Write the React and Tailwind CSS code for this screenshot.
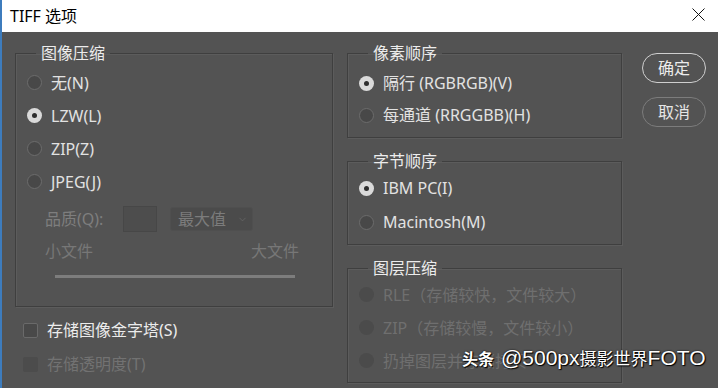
// TIFF options dialog (Photoshop dark UI)
import { ChevronDown } from 'lucide-react';

const FONT = { fontFamily: '"Noto Sans", "Noto Sans CJK SC", sans-serif' };

const Radio = ({ checked, disabled }) =>
  checked ? (
    <span className="w-[15px] h-[15px] shrink-0 rounded-full bg-[#dadada] flex items-center justify-center">
      <span className="w-[5px] h-[5px] rounded-full bg-[#2e2e2e]" />
    </span>
  ) : disabled ? (
    <span className="w-[15px] h-[15px] shrink-0 rounded-full bg-[#4b4b4b]" />
  ) : (
    <span className="w-[15px] h-[15px] shrink-0 rounded-full border border-[#6c6c6c] bg-[#484848]" />
  );

const Option = ({ label, checked, disabled, h = 'h-[33px]' }) => (
  <div className={`${h} flex items-center gap-[9px]`}>
    <Radio checked={checked} disabled={disabled} />
    <span className={disabled ? 'text-[#6f6f6f]' : 'text-[#e2e2e2]'}>{label}</span>
  </div>
);

const Group = ({ title, className, children }) => (
  <fieldset className={`border border-[#3f3f3f] shadow-[inset_1px_1px_0_#5c5c5c,1px_1px_0_#5c5c5c] pl-[11px] ${className}`}>
    <legend className="ml-[9px] px-[5px] h-[20px] leading-[20px] text-[#ececec]">{title}</legend>
    {children}
  </fieldset>
);

export default function App() {
  return (
    <div
      className="relative w-[718px] h-[388px] flex flex-col border-l-2 border-[#3d7cbd] text-[16px] leading-[20px] overflow-hidden"
      style={FONT}
    >
      <div className="h-[32px] shrink-0 bg-white flex items-center justify-between pl-[8px] pr-[13px]">
        <span className="text-[16px] text-black">TIFF 选项</span>
        <svg width="13" height="13" viewBox="0 0 13 13" className="mt-[-4px]">
          <path d="M0.5 0.5 L12.5 12.5 M12.5 0.5 L0.5 12.5" stroke="#111" strokeWidth="1" />
        </svg>
      </div>

      <div className="flex-1 bg-[#535353] flex pl-[13px] pt-[11px]">
        {/* left column */}
        <div className="w-[318px] flex flex-col">
          <Group title="图像压缩" className="h-[264px]">
            <div className="pt-[3px]">
              <Option label="无(N)" />
              <Option label="LZW(L)" checked />
              <Option label="ZIP(Z)" />
              <Option label="JPEG(J)" />
            </div>
            <div className="mt-[8px] h-[26px] flex items-center pl-[18px]">
              <span className="w-[78px] text-[#7e7e7e]">品质(Q):</span>
              <span className="w-[34px] h-[26px] border border-[#474747] bg-[#4d4d4d]" />
              <span className="ml-[13px] w-[83px] h-[24px] rounded-[3px] bg-[#4b4b4b] border border-[#4f4f4f] flex items-center justify-between pl-[7px] pr-[4px] text-[#7c7c7c]">
                最大值
                <ChevronDown size={11} strokeWidth={1.5} className="text-[#6a6a6a]" />
              </span>
            </div>
            <div className="mt-[9px] h-[20px] flex justify-between pl-[18px] pr-[33px] text-[#777777]">
              <span>小文件</span>
              <span>大文件</span>
            </div>
            <div className="mt-[14px] ml-[28px] w-[240px] h-[3px] bg-[#7d7d7d]" />
          </Group>

          <div className="mt-[13px] h-[20px] flex items-center gap-[9px] pl-[8px]">
            <span className="w-[15px] h-[15px] rounded-[2px] border border-[#6a6a6a] bg-[#494949]" />
            <span className="text-[#ececec]">存储图像金字塔(S)</span>
          </div>
          <div className="mt-[14px] h-[20px] flex items-center gap-[9px] pl-[8px]">
            <span className="w-[15px] h-[15px] rounded-[2px] bg-[#4c4c4c]" />
            <span className="text-[#727272]">存储透明度(T)</span>
          </div>
        </div>

        {/* right column */}
        <div className="ml-[14px] w-[275px] flex flex-col">
          <Group title="像素顺序" className="h-[95px]">
            <div className="pt-[4px]">
              <Option label="隔行 (RGBRGB)(V)" checked h="h-[32px]" />
              <Option label="每通道 (RRGGBB)(H)" h="h-[32px]" />
            </div>
          </Group>
          <Group title="字节顺序" className="mt-[13px] h-[94px]">
            <Option label="IBM PC(I)" checked h="h-[34px]" />
            <Option label="Macintosh(M)" h="h-[34px]" />
          </Group>
          <Group title="图层压缩" className="mt-[13px] h-[125px]">
            <Option label="RLE（存储较快，文件较大）" disabled />
            <Option label="ZIP（存储较慢，文件较小）" disabled />
            <Option label="扔掉图层并存储拷贝" disabled />
          </Group>
        </div>

        {/* buttons */}
        <div className="ml-[20px] pt-[10px] flex flex-col gap-[14px]">
          <button className="w-[64px] h-[30px] rounded-full border-[1.5px] border-[#cfcfcf] text-[#ececec] text-[16px]">
            确定
          </button>
          <button className="w-[64px] h-[30px] rounded-full border-[1.5px] border-[#7c7c7c] text-[#e6e6e6] text-[16px]">
            取消
          </button>
        </div>
      </div>

      {/* watermark */}
      <div className="absolute left-[460px] top-[348px] flex items-baseline text-white [text-shadow:1px_1px_1px_#000,0_0_2px_#000]">
        <span className="text-[16px] font-bold">头条</span>
        <span className="ml-[7px] text-[21px] font-['Liberation_Sans']">@500px</span>
        <span className="text-[17px]">摄影世界</span>
        <span className="text-[21px] font-['Liberation_Sans']">FOTO</span>
      </div>
    </div>
  );
}
